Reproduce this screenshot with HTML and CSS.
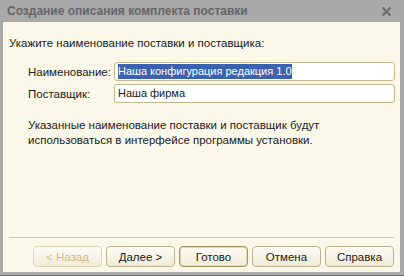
FILE: index.html
```html
<!DOCTYPE html>
<html lang="ru">
<head>
<meta charset="utf-8">
<link rel="stylesheet" href="styles.css">
</head>
<body>
<div class="window">
  <div class="titlebar">
    <span class="title">Создание описания комплекта поставки</span>
    <svg class="close" width="11" height="11" viewBox="0 0 11 11"><path d="M1.5 1.5 L9.5 9.5 M9.5 1.5 L1.5 9.5" stroke="#6e6e6e" stroke-width="2.2"/></svg>
  </div>
  <div class="content">
    <p class="prompt">Укажите наименование поставки и поставщика:</p>
    <div class="form">
      <label class="lbl">Наименование:</label>
      <div class="input"><span class="sel">Наша конфигурация редакция 1.0</span></div>
      <label class="lbl">Поставщик:</label>
      <div class="input">Наша фирма</div>
    </div>
    <p class="note">Указанные наименование поставки и поставщик будут<br>использоваться в интерфейсе программы установки.</p>
    <div class="spacer"></div>
    <div class="sep"></div>
    <div class="buttons">
      <button class="btn disabled">&lt; Назад</button>
      <button class="btn">Далее &gt;</button>
      <button class="btn default">Готово</button>
      <button class="btn">Отмена</button>
      <button class="btn">Справка</button>
    </div>
  </div>
</div>
</body>
</html>
```
FILE: styles.css
```css
html, body {
  margin: 0;
  padding: 0;
  background: #a9a9a9;
}
.window {
  width: 404px;
  height: 276px;
  box-sizing: border-box;
  display: flex;
  flex-direction: column;
  background: #a9a9a9;
  border-bottom: 1px solid #6a6a6a;
  font-family: "Liberation Sans", Arial, sans-serif;
  font-size: 11.5px;
  color: #1a1a1a;
}
.titlebar {
  height: 22px;
  display: flex;
  align-items: center;
  justify-content: space-between;
  padding: 0 12px 0 7px;
  flex: none;
}
.title {
  font-weight: bold;
  font-size: 12px;
  color: #666666;
}
.close { display: block; }
.content {
  flex: 1;
  margin: 0 4px 3px 3px;
  background: #fbf8ea;
  display: flex;
  flex-direction: column;
  padding: 0 6px 0 6px;
}
.prompt {
  margin: 14px 0 0 0;
  line-height: 14px;
}
.form {
  margin: 12px 0 0 19px;
  display: grid;
  grid-template-columns: 86px 281px;
  row-gap: 3px;
  align-items: center;
}
.lbl { line-height: 14px; }
.input {
  height: 19px;
  box-sizing: border-box;
  border: 1px solid #c4b88e;
  border-radius: 3px;
  background: #ffffff;
  padding: 0 3px;
  line-height: 17px;
  white-space: nowrap;
  font-size: 11px;
}
.sel {
  background: #3a62b0;
  color: #ffffff;
  display: inline-block;
  line-height: 15px;
  margin-top: 1px;
  vertical-align: top;
}
.note {
  margin: 15px 0 0 19px;
  line-height: 15px;
}
.spacer { flex: 1; }
.sep {
  height: 1px;
  background: #cdc39c;
}
.buttons {
  display: flex;
  justify-content: flex-end;
  gap: 4px;
  padding: 8px 0 5px 0;
}
.btn {
  width: 69px;
  height: 21px;
  border: 1px solid #bcb190;
  border-radius: 4px;
  background: linear-gradient(#fdfcf6, #f1ecd8);
  font-family: "Liberation Sans", Arial, sans-serif;
  font-size: 11.5px;
  color: #1a1a1a;
  padding: 0;
}
.btn.disabled {
  color: #d4b98c;
  border-color: #ddd5b8;
}
.btn.default {
  border-color: #a49565;
  box-shadow: inset 0 0 0 1px #e3d9b0;
}
```
